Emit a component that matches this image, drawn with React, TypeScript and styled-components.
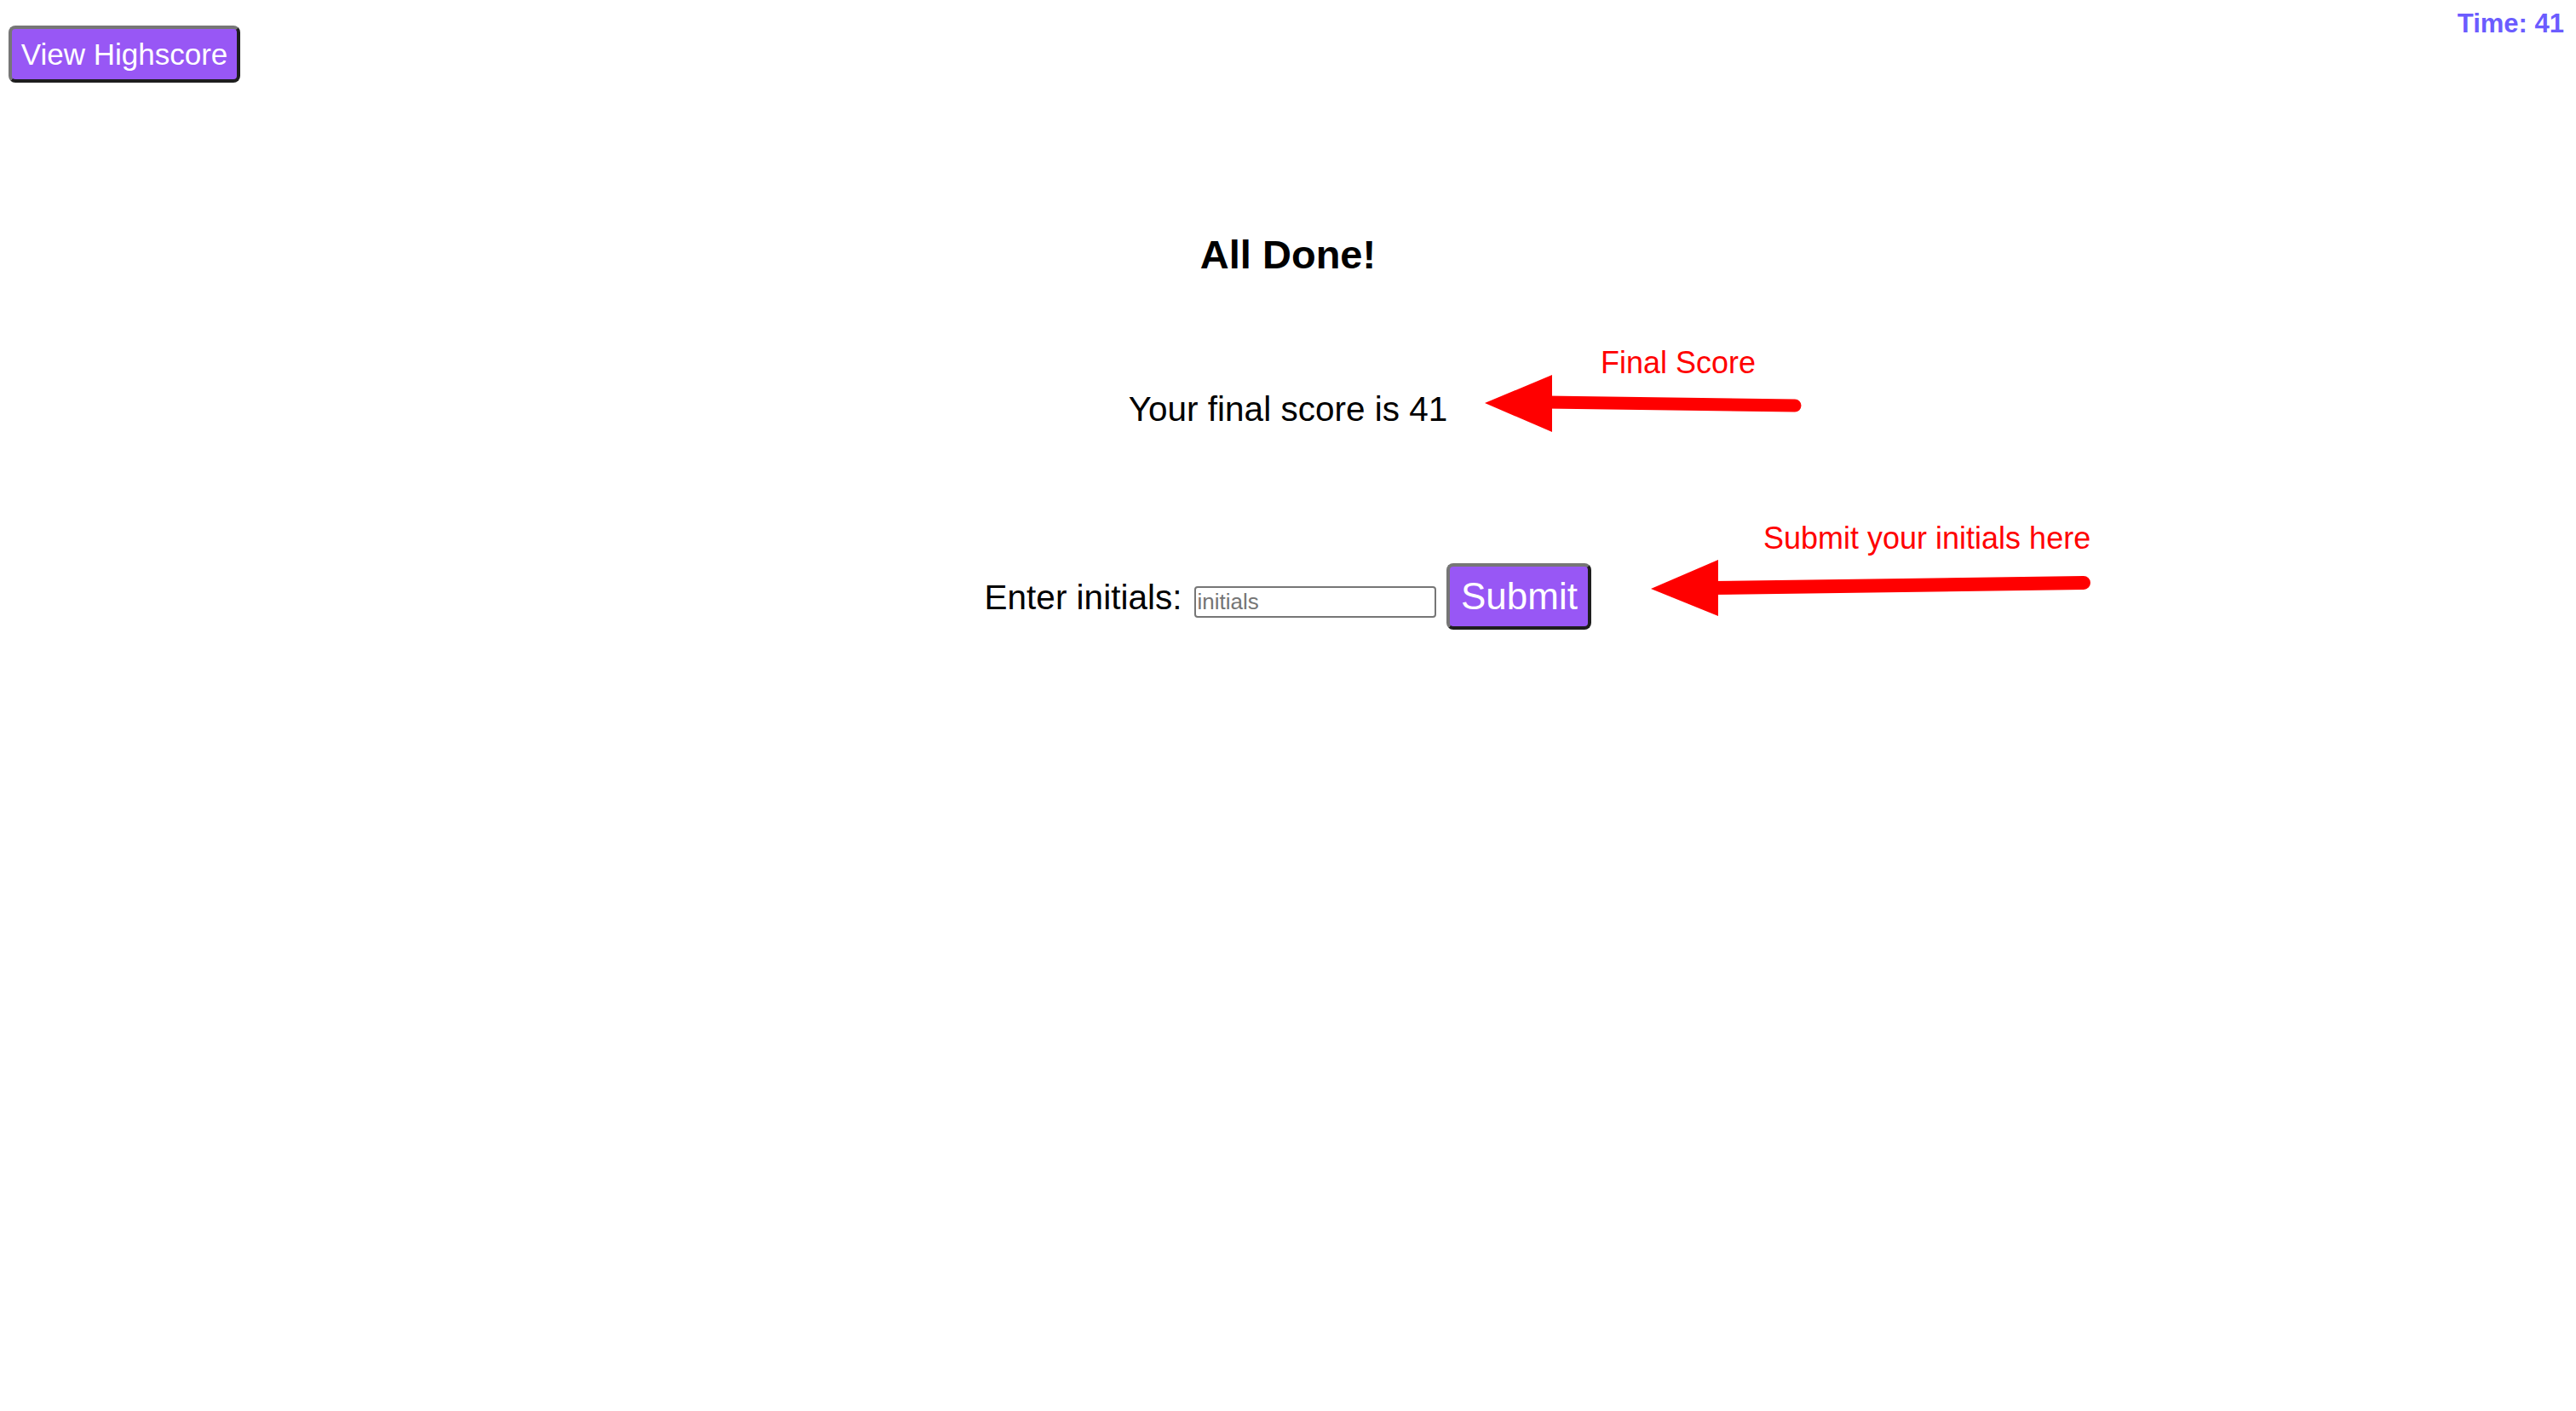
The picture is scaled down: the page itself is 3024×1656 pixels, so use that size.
import React from "react";
import styled, { createGlobalStyle } from "styled-components";

const GlobalStyle = createGlobalStyle`
  html, body {
    margin: 0;
    padding: 0;
    background: #ffffff;
    font-family: "Liberation Sans", Arial, Helvetica, sans-serif;
  }
`;

const Page = styled.div`
  position: relative;
  min-height: 1656px;
  background: #ffffff;
  color: #000000;
`;

const Header = styled.header`
  display: flex;
  justify-content: space-between;
  align-items: flex-start;
  padding: 0 14px 0 10px;
`;

const PurpleButton = styled.button<{ $size: number; $w: number; $h: number }>`
  box-sizing: border-box;
  width: ${(p) => p.$w}px;
  height: ${(p) => p.$h}px;
  padding: 0;
  background: #9857f5;
  color: #ffffff;
  font-family: "Liberation Sans", Arial, sans-serif;
  font-size: ${(p) => p.$size}px;
  line-height: 1;
  border-style: solid;
  border-width: 4px;
  border-color: #767676 #1e1e1e #1e1e1e #767676;
  border-radius: 8px;
  cursor: pointer;
  display: flex;
  align-items: center;
  justify-content: center;
  white-space: nowrap;
`;

const HighscoreButton = styled(PurpleButton)`
  margin-top: 30px;
`;

const Timer = styled.div`
  margin-top: 10px;
  font-size: 31px;
  font-weight: 700;
  color: #6b5cff;
  line-height: normal;
`;

const Main = styled.main`
  display: flex;
  flex-direction: column;
  align-items: center;
`;

const Title = styled.h2`
  margin: 175px 0 0;
  font-size: 47px;
  font-weight: 700;
  line-height: 54px;
`;

const Score = styled.p`
  margin: 131px 0 0;
  font-size: 40.5px;
  line-height: 46px;
`;

const Form = styled.form`
  margin-top: 158px;
  display: flex;
  align-items: flex-start;
`;

const Label = styled.label`
  margin-top: 17px;
  font-size: 40.5px;
  line-height: 46px;
  margin-right: 15px;
`;

const Input = styled.input`
  box-sizing: border-box;
  margin-top: 27px;
  width: 284px;
  height: 37px;
  padding: 0 2px 0 1px;
  border: 2px solid #767676;
  border-radius: 4px;
  font-family: "Liberation Sans", Arial, sans-serif;
  font-size: 26px;
  color: #000;
  outline: none;
  margin-right: 12px;
  &::placeholder {
    color: #757575;
  }
`;

const Overlay = styled.svg`
  position: absolute;
  left: 0;
  top: 0;
  width: 3024px;
  height: 1656px;
  pointer-events: none;
`;

const Note = styled.div<{ $x: number; $y: number }>`
  position: absolute;
  left: ${(p) => p.$x}px;
  top: ${(p) => p.$y}px;
  font-size: 36px;
  line-height: 36px;
  color: #ff0000;
  white-space: nowrap;
  pointer-events: none;
`;

export default function App() {
  return (
    <Page>
      <GlobalStyle />
      <Header>
        <HighscoreButton $size={35} $w={272} $h={67} type="button">
          View Highscore
        </HighscoreButton>
        <Timer>Time: 41</Timer>
      </Header>
      <Main>
        <Title>All Done!</Title>
        <Score>Your final score is 41</Score>
        <Form onSubmit={(e) => e.preventDefault()}>
          <Label htmlFor="initials">Enter initials:</Label>
          <Input id="initials" type="text" placeholder="initials" />
          <PurpleButton $size={44} $w={170} $h={78} type="submit">
            Submit
          </PurpleButton>
        </Form>
      </Main>

      <Overlay viewBox="0 0 3024 1656">
        <polygon points="1743,473 1822,440 1822,507" fill="#ff0000" />
        <line
          x1="1815"
          y1="472"
          x2="2107"
          y2="476"
          stroke="#ff0000"
          strokeWidth="15"
          strokeLinecap="round"
        />
        <polygon points="1938,691 2017,657 2017,723" fill="#ff0000" />
        <line
          x1="2010"
          y1="690"
          x2="2446"
          y2="684"
          stroke="#ff0000"
          strokeWidth="16"
          strokeLinecap="round"
        />
      </Overlay>
      <Note $x={1879} $y={408}>Final Score</Note>
      <Note $x={2070} $y={614}>Submit your initials here</Note>
    </Page>
  );
}
